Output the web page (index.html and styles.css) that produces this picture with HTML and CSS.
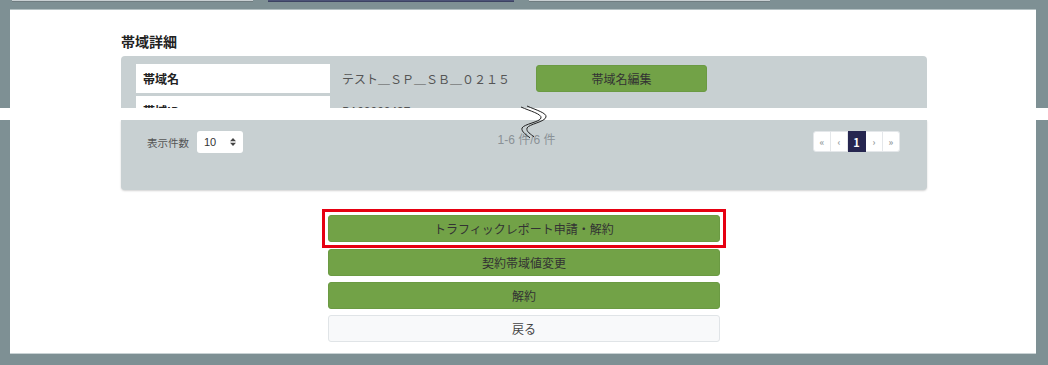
FILE: index.html
```html
<!DOCTYPE html>
<html lang="ja">
<head>
  <meta charset="UTF-8" />
  <title>帯域詳細</title>
  <link rel="stylesheet" href="styles.css">
</head>
<body>
  <!-- tabs cut off at the top -->
  <div class="tabs">
    <span class="tab"></span>
    <span class="tab tab-active"></span>
    <span class="tab"></span>
  </div>

  <!-- upper part of the sheet -->
  <div class="sheet sheet-top">
    <h2 class="title">帯域詳細</h2>
    <div class="card card-info">
      <div class="row">
        <div class="label">帯域名</div>
        <div class="value">テスト＿ＳＰ＿ＳＢ＿０２１５</div>
        <button class="btn btn-green btn-edit">帯域名編集</button>
      </div>
      <div class="row">
        <div class="label">帯域ID</div>
        <div class="value">BA00000427</div>
      </div>
    </div>
  </div>

  <!-- omitted section mark -->
  <div class="cut">
    <svg class="break" width="34" height="40" viewBox="0 0 34 40">
      <path d="M5 6 C14 10, 26 13, 25 17 C24 21, 8 23, 6 27 C5 31, 11 34, 14 37" />
      <path d="M11 5 C20 9, 31 12, 30 16 C29 21, 13 23, 11 27 C10 31, 15 33, 18 36" />
    </svg>
  </div>

  <!-- lower part of the sheet -->
  <div class="sheet sheet-bottom">
    <div class="card card-pager">
      <div class="pager-left">
        <span class="pager-label">表示件数</span>
        <div class="select">
          10
          <svg class="select-arrow" width="6" height="8" viewBox="0 0 6 8">
            <path d="M0 3.2 L3 0 L6 3.2 Z M0 4.8 L3 8 L6 4.8 Z" />
          </svg>
        </div>
      </div>
      <div class="pager-count">1-6 件/6 件</div>
      <ul class="pagination">
        <li>&laquo;</li>
        <li>&lsaquo;</li>
        <li class="active">1</li>
        <li>&rsaquo;</li>
        <li>&raquo;</li>
      </ul>
    </div>

    <div class="actions">
      <div class="highlight">
        <button class="btn btn-green btn-wide">トラフィックレポート申請・解約</button>
      </div>
      <button class="btn btn-green btn-wide">契約帯域値変更</button>
      <button class="btn btn-green btn-wide">解約</button>
      <button class="btn btn-light btn-wide">戻る</button>
    </div>
  </div>
</body>
</html>
```

FILE: styles.css
```css
body {
  margin: 0;
  background-color: #7e9094;
  font-family: "Noto Sans CJK JP", "Noto Sans", sans-serif;
  color: #333;
  height: 365px;
  overflow: hidden;
}

/* tabs */
.tabs {
  display: flex;
  height: 9px;
  padding-left: 12px;
  gap: 15px;
}
.tab {
  width: 241px;
  height: 1px;
  background-color: #c9d0d3;
  border-bottom: 1px solid #6f7c80;
}
.tab-active {
  width: 246px;
  background-color: #4c5377;
  border-bottom-color: #3c4262;
}

/* sheet */
.sheet {
  background-color: #fff;
  margin: 0 12px 0 10px;
  padding: 0 109px 0 111px;
}
.sheet-top {
  height: 75px;
  padding-top: 23px;
  border-top: 1px solid #b4c1c3;
}
.sheet-bottom {
  padding-bottom: 11px;
  border-bottom: 1px solid #c9d2d4;
}

.title {
  font-size: 14px;
  font-weight: 700;
  line-height: 16px;
  margin: 0 0 7px;
  color: #222;
}

.card {
  background-color: #c8d0d2;
}
.card-info {
  height: 44px;
  padding: 8px 15px 0;
  border-radius: 4px 4px 0 0;
  overflow: hidden;
}

.row {
  display: flex;
  align-items: center;
  margin-bottom: 3px;
}
.label {
  width: 194px;
  height: 29px;
  line-height: 29px;
  background-color: #fff;
  padding-left: 7px;
  box-sizing: border-box;
  font-size: 12px;
  font-weight: 700;
  color: #222;
}
.value {
  width: 206px;
  padding-left: 12px;
  box-sizing: border-box;
  font-size: 12px;
  color: #555;
}

/* cut mark */
.cut {
  position: relative;
  height: 12px;
  background-color: #fff;
}
.break {
  position: absolute;
  left: 516px;
  top: -7px;
}
.break path {
  fill: none;
  stroke: #222;
  stroke-width: 1;
}

/* pager card */
.card-pager {
  display: grid;
  grid-template-columns: 1fr auto 1fr;
  align-items: start;
  height: 59px;
  padding: 11px 27px 0 26px;
  border-radius: 0 0 4px 4px;
  box-shadow: 0 1px 2px rgba(0, 0, 0, 0.18);
}
.pager-left {
  display: flex;
  align-items: center;
  gap: 8px;
}
.pager-label {
  font-size: 10.5px;
  color: #555;
}
.select {
  display: flex;
  align-items: center;
  width: 46px;
  height: 22px;
  background-color: #fff;
  border-radius: 3px;
  padding-left: 7px;
  box-sizing: border-box;
  font-family: "Liberation Sans", Arial, sans-serif;
  font-size: 11px;
  color: #333;
}
.select-arrow {
  margin-left: 14px;
  fill: #444;
}
.pager-count {
  font-family: "Liberation Sans", "Noto Sans CJK JP", sans-serif;
  font-size: 12px;
  color: #8a9196;
  line-height: 16px;
  padding: 1px 0 0 6px;
}

.pagination {
  justify-self: end;
  display: flex;
  list-style: none;
  margin: 0;
  padding: 0;
}
.pagination li {
  width: 17px;
  height: 21px;
  line-height: 21px;
  text-align: center;
  background-color: #fff;
  border: 1px solid #e4e7ea;
  border-left: none;
  font-size: 9px;
  font-weight: 700;
  color: #9a9fa3;
  box-sizing: border-box;
}
.pagination li:first-child {
  border-left: 1px solid #e4e7ea;
  border-radius: 3px 0 0 3px;
  width: 18px;
}
.pagination li:last-child {
  border-radius: 0 3px 3px 0;
}
.pagination li.active {
  background-color: #262650;
  border-color: #262650;
  color: #fff;
  font-size: 11px;
  width: 18px;
}

/* buttons */
.btn {
  font-family: "Noto Sans CJK JP", sans-serif;
  font-size: 12px;
  color: #333;
  border-radius: 3px;
  cursor: pointer;
  padding: 0;
}
.btn-green {
  background-color: #72a247;
  border: 1px solid #6b9a43;
}
.btn-light {
  background-color: #f8f9fa;
  border: 1px solid #e0e4e7;
  color: #444;
}
.btn-edit {
  width: 171px;
  height: 27px;
}

.actions {
  display: flex;
  flex-direction: column;
  align-items: center;
  gap: 6px;
  margin-top: 19px;
}
.btn-wide {
  width: 392px;
  height: 27px;
}
.highlight {
  border: 3px solid #e60012;
  padding: 3px;
  margin-bottom: -5px;
  line-height: 0;
}
```
